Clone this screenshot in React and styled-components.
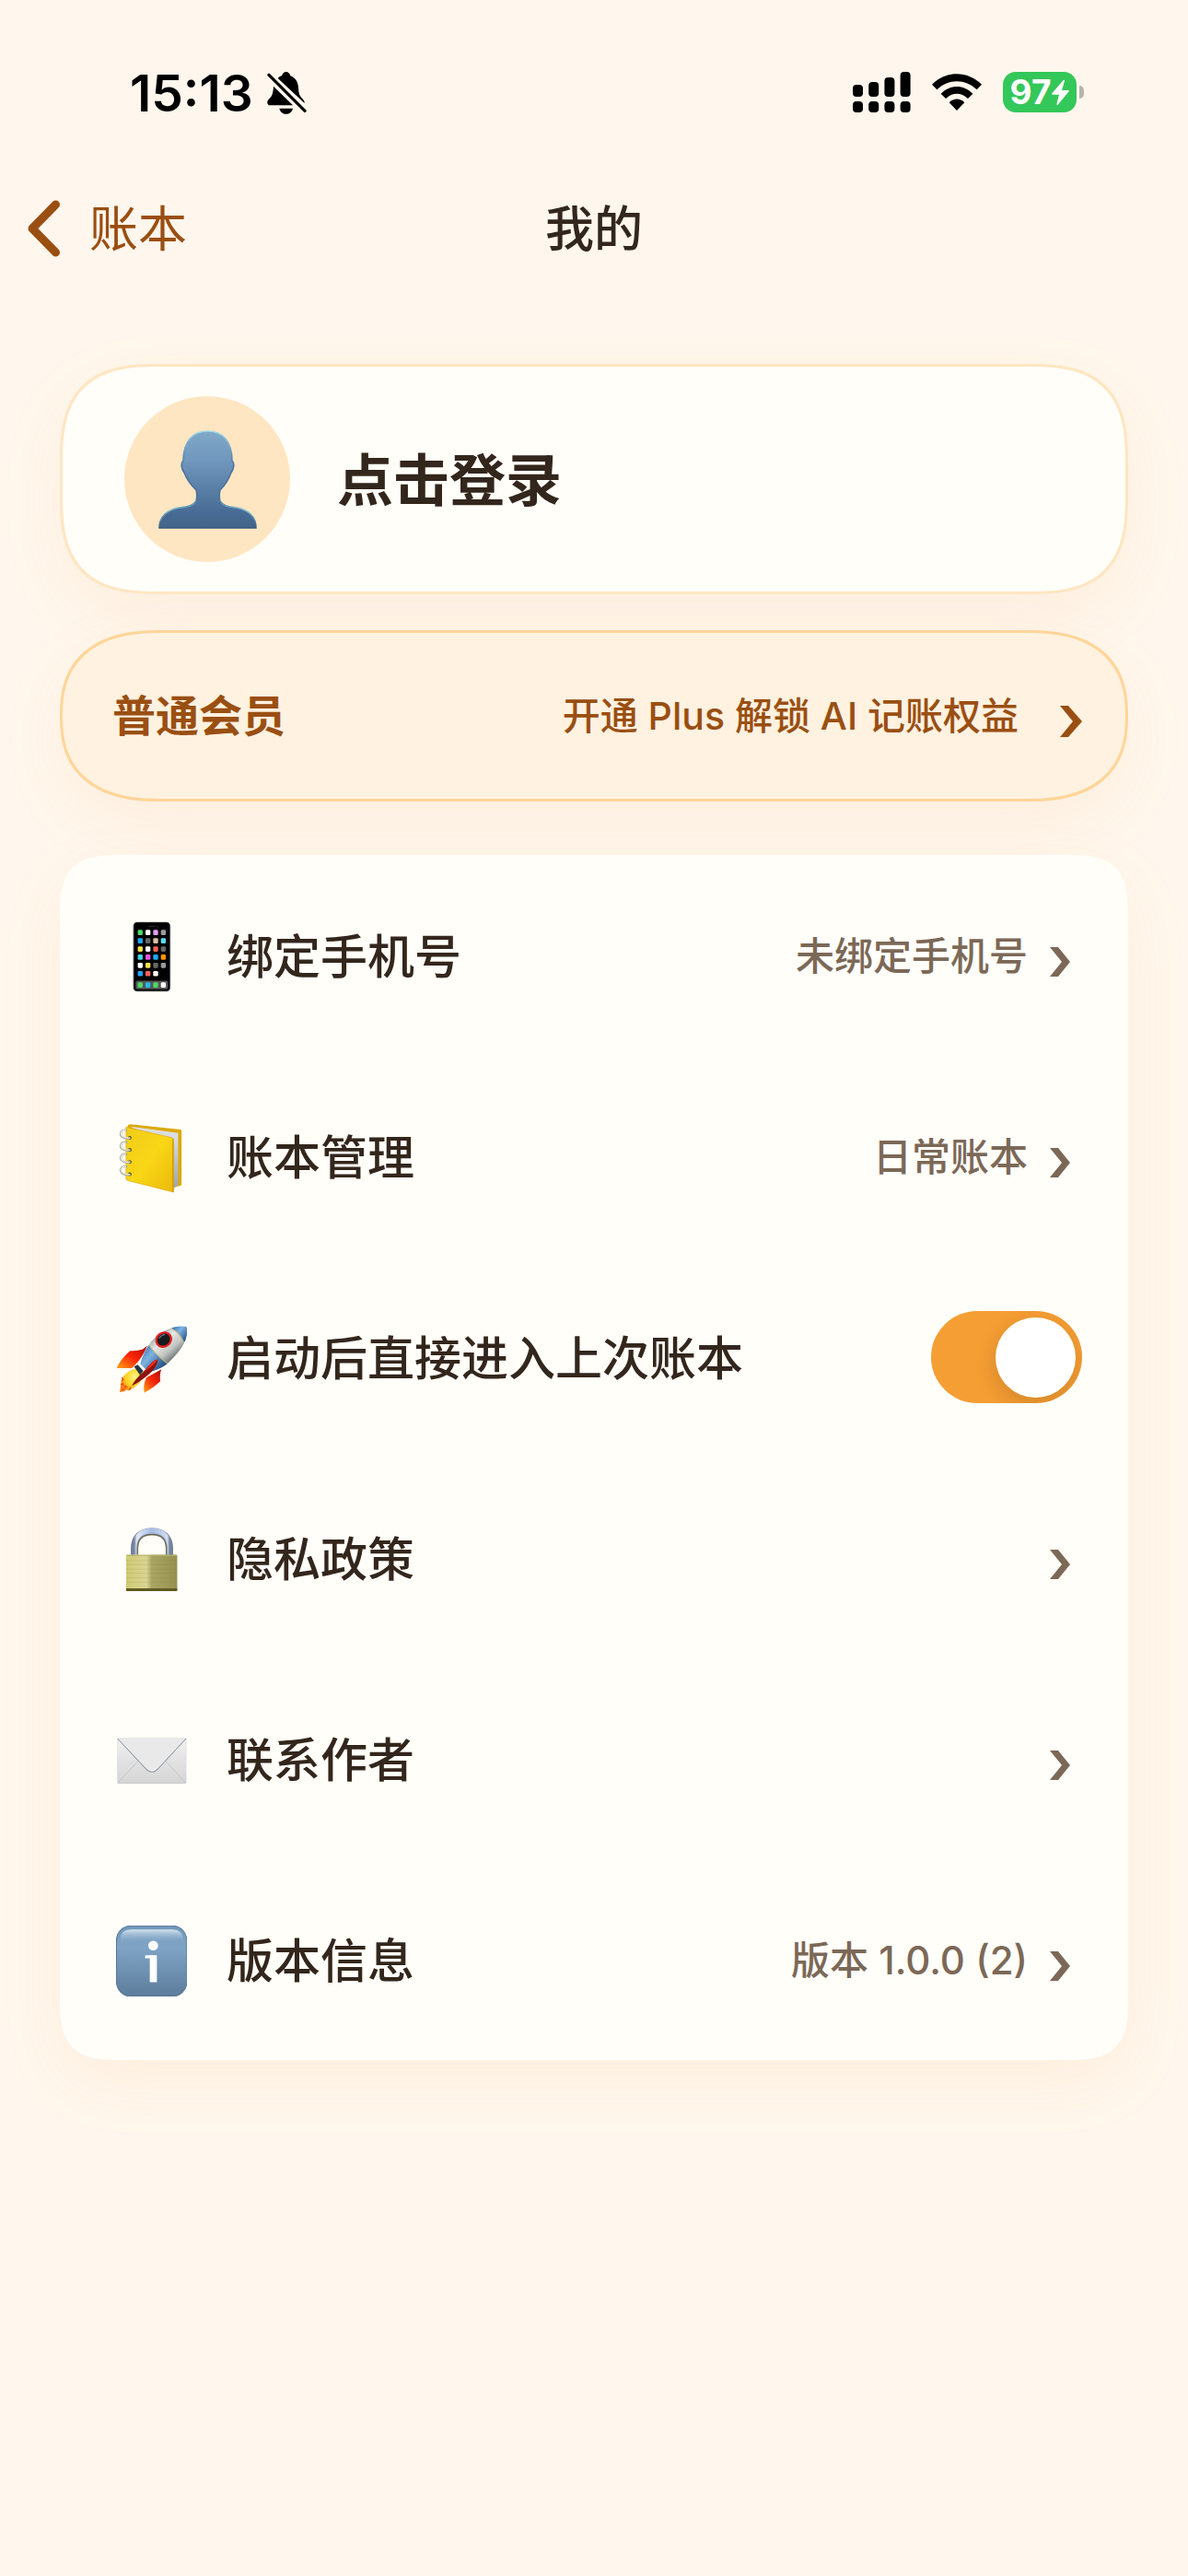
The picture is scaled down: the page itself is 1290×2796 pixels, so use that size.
import React, { useState } from "react";
import styled, { createGlobalStyle, css } from "styled-components";

const color = {
  page: "#fff7ed",
  card: "#fffef9",
  ink: "#33261c",
  brown: "#9a4f12",
  muted: "#7c6857",
  peach: "#ffe6c2",
  orange: "#f59e33",
};

const GlobalStyle = createGlobalStyle`
  *, *::before, *::after { box-sizing: border-box; }
  body {
    margin: 0;
    background: ${color.page};
    color: ${color.ink};
    font-family: Inter, "Noto Sans CJK SC", sans-serif;
  }
`;

const resetButton = css`
  appearance: none;
  margin: 0;
  border: 0;
  background: none;
  color: inherit;
  font: inherit;
  text-align: left;
  cursor: pointer;
`;

const softShadow = css`
  box-shadow: 0 24px 72px rgba(225, 140, 50, 0.08);
`;

const Screen = styled.div`
  min-height: 100vh;
  background: ${color.page};
`;

const StatusBar = styled.div`
  display: flex;
  align-items: center;
  justify-content: space-between;
  height: 200px;
  padding: 0 113px 0 141px;
  color: #000;
`;

const StatusGroup = styled.div`
  display: flex;
  align-items: center;
  gap: ${(p) => p.$gap}px;
`;

const Clock = styled.time`
  padding-top: 2px;
  font-size: 55px;
  line-height: 64px;
  font-weight: 600;
`;

const Battery = styled.div`
  display: flex;
  align-items: center;
  gap: 3px;
`;

const BatteryBody = styled.div`
  display: flex;
  align-items: center;
  justify-content: center;
  gap: 1px;
  width: 80px;
  height: 44px;
  border-radius: 14px;
  background: #34c759;
  color: #fff;
  font-size: 37px;
  line-height: 44px;
  font-weight: 700;
`;

const BatteryCap = styled.div`
  width: 5px;
  height: 14px;
  border-radius: 0 7px 7px 0;
  background: #b9b2ab;
`;

const NavBar = styled.header`
  display: grid;
  grid-template-columns: 1fr auto 1fr;
  align-items: center;
  height: 96px;
  padding: 0 30px;
  font-size: 53px;
  line-height: 64px;
`;

const BackButton = styled.button`
  ${resetButton}
  display: flex;
  align-items: center;
  gap: 32px;
  justify-self: start;
  padding: 0;
  color: ${color.brown};
`;

const BackLabel = styled.span`
  padding-top: 2px;
`;

const Title = styled.h1`
  margin: 0;
  padding-top: 2px;
  font-size: inherit;
  font-weight: 500;
`;

const Main = styled.main`
  padding: 99px 65px;
`;

const LoginCard = styled.button`
  ${resetButton}
  ${softShadow}
  display: flex;
  align-items: center;
  gap: 51px;
  width: 100%;
  height: 250px;
  padding: 0 67px;
  border: 3px solid ${color.peach};
  border-radius: 84px;
  background: ${color.card};

  @supports (corner-shape: squircle) {
    border-radius: 110px;
    corner-shape: superellipse(1.5);
  }
`;

const LoginLabel = styled.span`
  padding-top: 4px;
  font-size: 61px;
  line-height: 72px;
  font-weight: 700;
`;

const Avatar = styled.span`
  display: flex;
  align-items: center;
  justify-content: center;
  width: 180px;
  height: 180px;
  border-radius: 50%;
  background: ${color.peach};
`;

const PlanCard = styled.button`
  ${resetButton}
  ${softShadow}
  display: flex;
  align-items: center;
  width: 100%;
  height: 186px;
  margin-top: 39px;
  padding: 0 47px 0 54px;
  border: 3px solid #ffd599;
  border-radius: 84px;
  background: #fff2e0;
  color: ${color.brown};

  @supports (corner-shape: squircle) {
    border-radius: 110px / 93px;
    corner-shape: superellipse(1.3);
  }
`;

const PlanName = styled.span`
  flex: 1;
  font-size: 47px;
  line-height: 56px;
  font-weight: 700;
`;

const PlanOffer = styled.span`
  margin-right: 45px;
  font-size: 41px;
  line-height: 56px;
  font-weight: 500;
`;

const Menu = styled.ul`
  ${softShadow}
  margin: 58px 0 0;
  padding: 0;
  border-radius: 48px;
  background: ${color.card};
  list-style: none;

  @supports (corner-shape: squircle) {
    border-radius: 72px;
    corner-shape: superellipse(1.7);
  }
`;

const rowLayout = css`
  display: flex;
  align-items: center;
  width: 100%;
  height: 218px;
  padding: 0 50px 0 51px;
`;

const MenuButton = styled.button`
  ${resetButton}
  ${rowLayout}
`;

const MenuToggle = styled.label`
  ${rowLayout}
  cursor: pointer;
`;

const MenuIcon = styled.span`
  display: flex;
  justify-content: center;
  width: 96px;
  margin-right: 34px;
  padding-top: 2px;
`;

const MenuLabel = styled.span`
  flex: 1;
  padding-top: 4px;
  font-size: 51px;
  line-height: 64px;
  font-weight: 500;
`;

const MenuValue = styled.span`
  margin-right: 24px;
  padding-top: 2px;
  color: ${color.muted};
  font-size: 42px;
  line-height: 64px;
  font-weight: 500;
`;

const Switch = styled.input`
  appearance: none;
  display: flex;
  align-items: center;
  width: 164px;
  height: 100px;
  margin: 0;
  padding: 0 7px;
  border-radius: 50px;
  background: #d9d0c6;
  overflow: hidden;
  cursor: pointer;

  &::before {
    content: "";
    width: 87px;
    height: 87px;
    border-radius: 50%;
    background: #fff;
    box-shadow: 0 8px 24px rgba(60, 30, 0, 0.18);
  }

  &:checked {
    justify-content: flex-end;
    background: ${color.orange};
  }
`;

const Emoji = ({ x = 78.5, y, children }) => (
  <svg width="77" height="77" viewBox={`${x} ${y} 230 230`} aria-hidden="true">
    {children}
  </svg>
);

const BellOff = () => (
  <svg width="44" height="47" viewBox="0 0 132 141" aria-hidden="true">
    <path d="M38 24C43 19 47 17 51 16C53 8 58 3 65 3s12 5 14 13c16 6 25 20 26 38 1 19 3 25 12 35 6 6 9 10 8 16z" fill="#000" />
    <path d="M24 50L87 112H14c-9 0-13-9-8-17l10-11c5-8 7-18 8-34z" fill="#000" />
    <path d="M43 122h44c-3 12-12 18-22 18s-19-6-22-18z" fill="#000" />
    <path d="M13 13L126 129" stroke={color.page} strokeWidth="19" />
    <path d="M9 13L126 130" stroke="#000" strokeWidth="10" strokeLinecap="round" />
  </svg>
);

const Signal = () => (
  <svg width="63" height="44" viewBox="0 0 63 44" aria-hidden="true">
    {[14, 11, 6, 0].map((top, i) => (
      <g key={top}>
        <rect x={i * 17.2} y={top} width="11" height={27 - top} rx="4" />
        <rect x={i * 17.2} y="32" width="11" height="12" rx="4" />
      </g>
    ))}
  </svg>
);

const Wifi = () => (
  <svg width="54" height="40" viewBox="0 0 162 120" aria-hidden="true">
    <path d="M0 35C46-11 116-11 162 35L146 52C108 16 54 16 16 52Z" />
    <path d="M29 65C60 34 102 34 133 65L117 81C95 60 67 60 45 81Z" />
    <path d="M56 94C71 79 91 79 106 94L81 120Z" />
  </svg>
);

const Bolt = () => (
  <svg width="19" height="27" viewBox="0 0 57 81" aria-hidden="true">
    <path d="M38 0L1 43Q-1 47 4 47H24L16 79Q17 82 20 80L56 37Q58 33 53 33H33L42 2Q41-1 38 0Z" fill="#fff" />
  </svg>
);

const BackArrow = () => (
  <svg width="35" height="62" viewBox="0 0 35 62" aria-hidden="true">
    <path d="M30.500 5L5 31L30.500 57" fill="none" stroke="currentColor" strokeWidth="9" strokeLinecap="round" strokeLinejoin="round" />
  </svg>
);

const PlanArrow = () => (
  <svg width="24" height="46" viewBox="0 0 24 46" aria-hidden="true">
    <path d="M0 12H9L24 29L9 46H0L14 29Z" fill="currentColor" />
  </svg>
);

const RowArrow = () => (
  <svg width="35" height="46" viewBox="0 0 35 46" aria-hidden="true">
    <path d="M0 14H9L22 30L9 46H0L13 30Z" fill={color.muted} />
  </svg>
);

const Person = () => (
  <svg width="107" height="107" viewBox="0 0 107 107" aria-hidden="true">
    <defs>
      <linearGradient id="person" x1="0" y1="0" x2="0" y2="1">
        <stop offset="0" stopColor="#80a8c8" />
        <stop offset=".3" stopColor="#7097bd" />
        <stop offset=".85" stopColor="#476b94" />
        <stop offset="1" stopColor="#44648a" />
      </linearGradient>
      <linearGradient id="personRim" x1="0" y1="0" x2="0" y2="1">
        <stop offset="0" stopColor="#9edbea" />
        <stop offset=".35" stopColor="#48709a" />
        <stop offset=".7" stopColor="#48709a" />
        <stop offset=".82" stopColor="#7fbcd4" />
        <stop offset="1" stopColor="#36547c" />
      </linearGradient>
    </defs>
    <path
      d="M53.500 1C70 1 80 12 80 33C83 35 82 42 79 46C76 54 73 59 67 65C66 69 66 73 67 77C70 82 76 83 84 84C98 86 106 94 106 106H1C1 94 9 86 23 84C31 83 38 82 41 77C42 73 42 69 41 65C35 59 31 54 28 46C25 42 24 35 27 33C27 12 37 1 53.500 1Z"
      fill="url(#person)"
      stroke="url(#personRim)"
      strokeWidth="1.500"
    />
  </svg>
);

const appColors = [
  ["#4cd964", "#ffffff", "#e59bf2", "#9a9a9a"],
  ["#1fa8ff", "#666666", "#dcc3a1", "#57dcf2"],
  ["#ffe04d", "#ffffff", "#ff6058", "#666666"],
  ["#43d5e6", "#e456e4", "#1fa8ff", "#ff9500"],
  ["#ffffff", "#ffe04d", "#666666", "#9a9a9a"],
  ["#1fa8ff", "#ff6058", "#ffffff"],
];

const Phone = () => (
  <Emoji y={119}>
    <rect x="134" y="121" width="121" height="226" rx="13" fill="#55585c" />
    <rect x="137" y="123" width="115" height="221" rx="11" fill="#000" />
    <rect x="184" y="133" width="22" height="5" rx="2" fill="#222" />
    <circle cx="213" cy="136" r="3" fill="#222" />
    {appColors.map((row, r) =>
      row.map((fill, c) => (
        <rect key={`${r}-${c}`} x={149 + c * 25} y={147 + r * 26.600} width="16" height="17" rx="4" fill={fill} />
      ))
    )}
    <rect x="142" y="312" width="105" height="27" rx="6" fill="#565656" />
    {["#4cd964", "#1fbaf0", "#4cd964", "#ffffff"].map((fill, c) => (
      <rect key={c} x={149 + c * 25} y="317" width="16" height="17" rx="4" fill={fill} />
    ))}
  </Emoji>
);

const Ledger = () => (
  <Emoji y={773}>
    <defs>
      <linearGradient id="cover" x1="0" y1="0" x2="1" y2="1">
        <stop offset="0" stopColor="#f0cb1a" />
        <stop offset=".5" stopColor="#f8d716" />
        <stop offset="1" stopColor="#ecb80c" />
      </linearGradient>
      <linearGradient id="pages" x1="0" y1="0" x2="0" y2="1">
        <stop offset="0" stopColor="#e6e9ec" />
        <stop offset="1" stopColor="#98a3aa" />
      </linearGradient>
    </defs>
    <path d="M116 785Q118 780 124 780L288 797Q291 798 291 802V974Q291 978 287 979L266 984L116 950Z" fill="#dba90a" />
    <path d="M124 787L280 808V976L262 990L250 830Z" fill="url(#pages)" />
    <path d="M126 789L278 811L262 825L160 803Z" fill="#d9dde0" />
    <path d="M111 789L259 823Q265 825 265 831V1000L115 962Q111 960 111 956Z" fill="url(#cover)" stroke="#e0a90c" strokeWidth="2" />
    <path d="M263 826V999" stroke="#c99208" strokeWidth="3" />
    {[824, 863, 902, 942].map((cy) => (
      <g key={cy}>
        <circle cx="123" cy={cy} r="6" fill="#57501f" />
        <path d={`M123 ${cy + 1}C105 ${cy + 4} 91 ${cy - 6} 94 ${cy - 16}Q98 ${cy - 27} 112 ${cy - 25}`} fill="none" stroke="#a7ab96" strokeWidth="7" strokeLinecap="round" />
        <path d={`M121 ${cy}C105 ${cy + 2} 93 ${cy - 7} 95 ${cy - 16}Q99 ${cy - 25} 110 ${cy - 25}`} fill="none" stroke="#eff0e6" strokeWidth="3.500" strokeLinecap="round" />
      </g>
    ))}
  </Emoji>
);

const Rocket = () => (
  <Emoji y={108}>
    <defs>
      <linearGradient id="hull" x1=".25" y1=".25" x2=".7" y2=".75">
        <stop offset="0" stopColor="#8f9899" />
        <stop offset=".35" stopColor="#e5e7e4" />
        <stop offset=".65" stopColor="#c2c6c3" />
        <stop offset="1" stopColor="#4f5759" />
      </linearGradient>
      <linearGradient id="hullBlue" x1=".1" y1=".2" x2=".8" y2=".8">
        <stop offset="0" stopColor="#366fae" />
        <stop offset=".4" stopColor="#7fb3e2" />
        <stop offset="1" stopColor="#1c4a80" />
      </linearGradient>
      <linearGradient id="fin" x1="1" y1="0" x2="0" y2="1">
        <stop offset="0" stopColor="#a80d05" />
        <stop offset=".5" stopColor="#fb2409" />
        <stop offset="1" stopColor="#ffa312" />
      </linearGradient>
      <radialGradient id="flame" cx=".65" cy=".35" r=".7">
        <stop offset="0" stopColor="#fff68a" />
        <stop offset=".55" stopColor="#ffd21f" />
        <stop offset="1" stopColor="#f5801a" />
      </radialGradient>
      <clipPath id="hullClip">
        <path d="M303 119C312 120 311 134 307 151C301 180 276 210 248 237C230 253 207 262 183 266L157 240C164 216 176 190 193 167C225 130 270 115 303 119Z" />
      </clipPath>
    </defs>
    <path d="M146 256C122 260 104 274 97 292C92 304 95 315 90 333C101 329 105 333 112 324C118 330 125 327 131 320C145 317 162 298 167 276Z" fill="url(#flame)" />
    <path d="M97 285l5 6-6 5M94 309l7-5 2 9M107 321l2-9 7 5M121 324l6-8M98 326l5-4" fill="none" stroke="#f04a12" strokeWidth="4" />
    <path d="M180 181L165 193Q145 200 124 198C104 214 90 234 80 254L130 254C146 238 164 222 180 181Z" fill="url(#fin)" />
    <path d="M226 258C219 272 222 290 222 297C208 310 191 323 170 334C167 317 169 301 177 285Z" fill="url(#fin)" />
    <path d="M137 249l12-6 18 20-11 14z" fill="#253744" />
    <g clipPath="url(#hullClip)">
      <rect x="140" y="110" width="180" height="170" fill="url(#hull)" />
      <path d="M184 178C199 199 221 222 245 239L190 285L140 240Z" fill="url(#hullBlue)" />
      <path d="M260 127C278 136 290 150 298 170L330 150V100H260Z" fill="url(#hullBlue)" />
      <path d="M184 178C199 199 221 222 245 239M260 127C278 136 290 150 298 170" fill="none" stroke="#c5b478" strokeWidth="3" />
    </g>
    <ellipse cx="233" cy="162" rx="25" ry="22" transform="rotate(-35 233 162)" fill="#171b1e" stroke="#df1f22" strokeWidth="7" />
    <path d="M218 158q7-11 19-13" fill="none" stroke="#66737b" strokeWidth="4" />
    <path d="M214 226C199 228 188 244 170 263C151 281 136 296 130 312C156 298 180 280 197 263C207 251 214 239 214 226Z" fill="#8e130c" />
    <path d="M214 226C198 229 186 247 168 267C184 257 202 245 214 226Z" fill="#f02a18" />
  </Emoji>
);

const Lock = () => (
  <Emoji y={763}>
    <defs>
      <linearGradient id="brass" x1="0" y1="0" x2="1" y2="0">
        <stop offset="0" stopColor="#cfcb73" />
        <stop offset=".4" stopColor="#d9d592" />
        <stop offset=".5" stopColor="#a9a562" />
        <stop offset="1" stopColor="#979250" />
      </linearGradient>
      <linearGradient id="shackle" x1="0" y1="0" x2="1" y2="0">
        <stop offset="0" stopColor="#7183a4" />
        <stop offset=".08" stopColor="#e1eafa" />
        <stop offset=".5" stopColor="#a5bbe4" />
        <stop offset=".93" stopColor="#cfdcf4" />
        <stop offset="1" stopColor="#73829d" />
      </linearGradient>
    </defs>
    <path d="M138 867V843C138 806 160 788 195 788S252 806 252 843V867" fill="none" stroke="#77767a" strokeWidth="23" />
    <path d="M137 867V843C137 805 160 786 195 786S253 805 253 843V867" fill="none" stroke="url(#shackle)" strokeWidth="17" />
    <path d="M149 862V843C149 814 166 798 195 798S241 814 241 843V862" fill="none" stroke="#716b50" strokeWidth="3" />
    <rect x="111" y="863" width="166" height="118" rx="4" fill="url(#brass)" />
    {[882, 895, 910, 923, 938, 952].map((y) => (
      <path key={y} d={`M112 ${y}H276`} stroke="#7e7b38" strokeOpacity=".25" strokeWidth="2" />
    ))}
    <path d="M112 865H276" stroke="#b5b36c" strokeWidth="3" />
    <path d="M111 972H277V978Q277 981 273 981H115Q111 981 111 978Z" fill="#5f5b20" />
  </Emoji>
);

const Envelope = () => (
  <Emoji y={97}>
    <defs>
      <linearGradient id="paper" x1="0" y1="0" x2="0" y2="1">
        <stop offset="0" stopColor="#f0f0f1" />
        <stop offset="1" stopColor="#d5d5d6" />
      </linearGradient>
    </defs>
    <rect x="83" y="140" width="223" height="147" rx="5" fill="url(#paper)" stroke="#c9c9cb" strokeWidth="1" />
    <path d="M84 286L149 216M305 286L240 216" stroke="#b9babc" strokeWidth="2" />
    <path d="M84 141L175 238Q195 260 215 238L305 141Z" fill="#e9e9ea" />
    <path d="M84 142L175 239Q195 261 215 239L305 142" fill="none" stroke="#9096a0" strokeWidth="3" />
    <path d="M85 140L176 236Q195 256 214 236L304 140" fill="none" stroke="#f8f8fb" strokeWidth="2" />
    <path d="M85 287H304" stroke="#c0c0c2" strokeWidth="2" />
  </Emoji>
);

const Info = () => (
  <Emoji y={752}>
    <defs>
      <linearGradient id="tile" x1="0" y1="0" x2="0" y2="1">
        <stop offset="0" stopColor="#6f97bb" />
        <stop offset=".3" stopColor="#7fa4c6" />
        <stop offset="1" stopColor="#5d7c9b" />
      </linearGradient>
      <linearGradient id="gloss" x1="0" y1="0" x2="0" y2="1">
        <stop offset="0" stopColor="#d3e2ee" />
        <stop offset="1" stopColor="#7fa4c6" stopOpacity="0" />
      </linearGradient>
    </defs>
    <rect x="80" y="753" width="228" height="229" rx="47" fill="url(#tile)" stroke="#587797" strokeWidth="3" />
    <path d="M92 812V800Q92 765 128 765H260Q296 765 296 800V812Z" fill="url(#gloss)" />
    <circle cx="199" cy="817" r="16" fill="#fff" />
    <rect x="173" y="848" width="28" height="10" rx="1" fill="#fff" />
    <rect x="188" y="848" width="23" height="88" rx="1" fill="#fff" />
  </Emoji>
);

const Row = ({ icon, label, value }) => (
  <li>
    <MenuButton type="button">
      <MenuIcon>{icon}</MenuIcon>
      <MenuLabel>{label}</MenuLabel>
      {value && <MenuValue>{value}</MenuValue>}
      <RowArrow />
    </MenuButton>
  </li>
);

export default function App() {
  const [openLast, setOpenLast] = useState(true);

  return (
    <>
      <GlobalStyle />
      <Screen>
        <StatusBar>
          <StatusGroup $gap={14}>
            <Clock>15:13</Clock>
            <BellOff />
          </StatusGroup>
          <StatusGroup $gap={23}>
            <Signal />
            <Wifi />
            <Battery>
              <BatteryBody>
                97
                <Bolt />
              </BatteryBody>
              <BatteryCap />
            </Battery>
          </StatusGroup>
        </StatusBar>

        <NavBar>
          <BackButton type="button">
            <BackArrow />
            <BackLabel>账本</BackLabel>
          </BackButton>
          <Title>我的</Title>
        </NavBar>

        <Main>
          <LoginCard type="button">
            <Avatar>
              <Person />
            </Avatar>
            <LoginLabel>点击登录</LoginLabel>
          </LoginCard>

          <PlanCard type="button">
            <PlanName>普通会员</PlanName>
            <PlanOffer>开通 Plus 解锁 AI 记账权益</PlanOffer>
            <PlanArrow />
          </PlanCard>

          <Menu>
            <Row icon={<Phone />} label="绑定手机号" value="未绑定手机号" />
            <Row icon={<Ledger />} label="账本管理" value="日常账本" />
            <li>
              <MenuToggle htmlFor="open-last">
                <MenuIcon>
                  <Rocket />
                </MenuIcon>
                <MenuLabel>启动后直接进入上次账本</MenuLabel>
                <Switch
                  id="open-last"
                  type="checkbox"
                  role="switch"
                  checked={openLast}
                  onChange={(e) => setOpenLast(e.target.checked)}
                />
              </MenuToggle>
            </li>
            <Row icon={<Lock />} label="隐私政策" />
            <Row icon={<Envelope />} label="联系作者" />
            <Row icon={<Info />} label="版本信息" value="版本 1.0.0 (2)" />
          </Menu>
        </Main>
      </Screen>
    </>
  );
}
